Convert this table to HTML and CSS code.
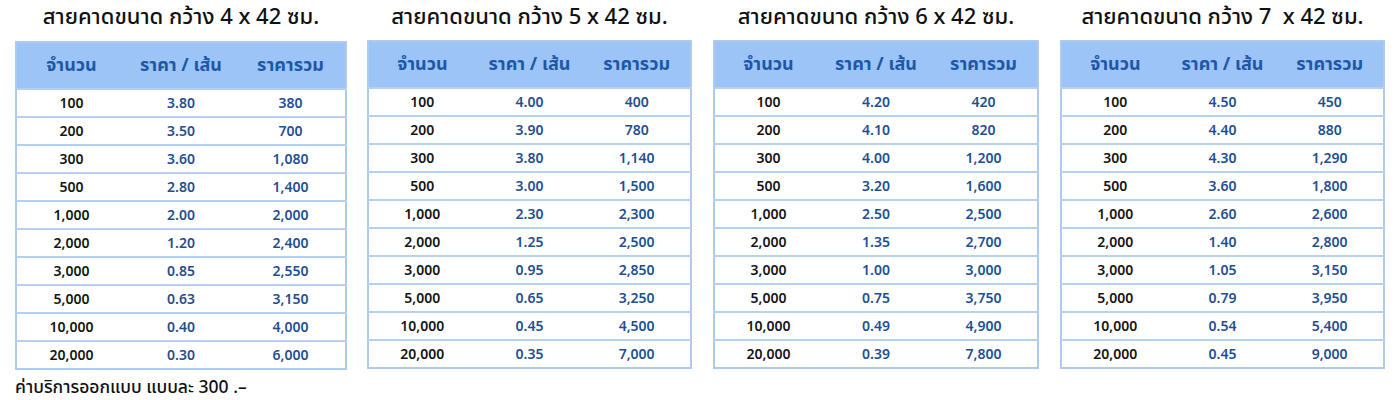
FILE: index.html
```html
<!DOCTYPE html>
<html lang="th">
<head>
<meta charset="utf-8">
<link rel="stylesheet" href="styles.css">
</head>
<body>
<div class="wrap">
  <div class="block b1">
    <h2 class="title">สายคาดขนาด กว้าง 4 x 42 ซม.</h2>
    <table class="price">
      <thead><tr><th>จำนวน</th><th>ราคา / เส้น</th><th>ราคารวม</th></tr></thead>
      <tbody>
        <tr><td>100</td><td>3.80</td><td>380</td></tr>
        <tr><td>200</td><td>3.50</td><td>700</td></tr>
        <tr><td>300</td><td>3.60</td><td>1,080</td></tr>
        <tr><td>500</td><td>2.80</td><td>1,400</td></tr>
        <tr><td>1,000</td><td>2.00</td><td>2,000</td></tr>
        <tr><td>2,000</td><td>1.20</td><td>2,400</td></tr>
        <tr><td>3,000</td><td>0.85</td><td>2,550</td></tr>
        <tr><td>5,000</td><td>0.63</td><td>3,150</td></tr>
        <tr><td>10,000</td><td>0.40</td><td>4,000</td></tr>
        <tr><td>20,000</td><td>0.30</td><td>6,000</td></tr>
      </tbody>
    </table>
    <p class="note">ค่าบริการออกแบบ แบบละ 300 .–</p>
  </div>
  <div class="block b2">
    <h2 class="title">สายคาดขนาด กว้าง 5 x 42 ซม.</h2>
    <table class="price">
      <thead><tr><th>จำนวน</th><th>ราคา / เส้น</th><th>ราคารวม</th></tr></thead>
      <tbody>
        <tr><td>100</td><td>4.00</td><td>400</td></tr>
        <tr><td>200</td><td>3.90</td><td>780</td></tr>
        <tr><td>300</td><td>3.80</td><td>1,140</td></tr>
        <tr><td>500</td><td>3.00</td><td>1,500</td></tr>
        <tr><td>1,000</td><td>2.30</td><td>2,300</td></tr>
        <tr><td>2,000</td><td>1.25</td><td>2,500</td></tr>
        <tr><td>3,000</td><td>0.95</td><td>2,850</td></tr>
        <tr><td>5,000</td><td>0.65</td><td>3,250</td></tr>
        <tr><td>10,000</td><td>0.45</td><td>4,500</td></tr>
        <tr><td>20,000</td><td>0.35</td><td>7,000</td></tr>
      </tbody>
    </table>
  </div>
  <div class="block b3">
    <h2 class="title">สายคาดขนาด กว้าง 6 x 42 ซม.</h2>
    <table class="price">
      <thead><tr><th>จำนวน</th><th>ราคา / เส้น</th><th>ราคารวม</th></tr></thead>
      <tbody>
        <tr><td>100</td><td>4.20</td><td>420</td></tr>
        <tr><td>200</td><td>4.10</td><td>820</td></tr>
        <tr><td>300</td><td>4.00</td><td>1,200</td></tr>
        <tr><td>500</td><td>3.20</td><td>1,600</td></tr>
        <tr><td>1,000</td><td>2.50</td><td>2,500</td></tr>
        <tr><td>2,000</td><td>1.35</td><td>2,700</td></tr>
        <tr><td>3,000</td><td>1.00</td><td>3,000</td></tr>
        <tr><td>5,000</td><td>0.75</td><td>3,750</td></tr>
        <tr><td>10,000</td><td>0.49</td><td>4,900</td></tr>
        <tr><td>20,000</td><td>0.39</td><td>7,800</td></tr>
      </tbody>
    </table>
  </div>
  <div class="block b4">
    <h2 class="title">สายคาดขนาด กว้าง 7&nbsp; x 42 ซม.</h2>
    <table class="price">
      <thead><tr><th>จำนวน</th><th>ราคา / เส้น</th><th>ราคารวม</th></tr></thead>
      <tbody>
        <tr><td>100</td><td>4.50</td><td>450</td></tr>
        <tr><td>200</td><td>4.40</td><td>880</td></tr>
        <tr><td>300</td><td>4.30</td><td>1,290</td></tr>
        <tr><td>500</td><td>3.60</td><td>1,800</td></tr>
        <tr><td>1,000</td><td>2.60</td><td>2,600</td></tr>
        <tr><td>2,000</td><td>1.40</td><td>2,800</td></tr>
        <tr><td>3,000</td><td>1.05</td><td>3,150</td></tr>
        <tr><td>5,000</td><td>0.79</td><td>3,950</td></tr>
        <tr><td>10,000</td><td>0.54</td><td>5,400</td></tr>
        <tr><td>20,000</td><td>0.45</td><td>9,000</td></tr>
      </tbody>
    </table>
  </div>
</div>
</body>
</html>
```
FILE: styles.css
```css
html, body {
  margin: 0;
  padding: 0;
  background: #ffffff;
}
body {
  font-family: "Noto Sans Thai", "Noto Sans", "DejaVu Sans", sans-serif;
  color: #111111;
}
.wrap {
  display: flex;
  align-items: flex-start;
  gap: 20px;
  padding-left: 15px;
}
.b1 { width: 332px; }
.b2 { width: 325px; }
.b3 { width: 326px; margin-left: 1px; }
.b4 { width: 325px; margin-left: 1px; }
.title {
  margin: 0;
  height: 40px;
  font-size: 22px;
  font-weight: 500;
  line-height: 36px;
  text-align: center;
  color: #111111;
  white-space: nowrap;
}
.b1 .title { height: 41px; }
.price {
  width: 100%;
  border-collapse: collapse;
  table-layout: fixed;
  border: 2px solid #aecbef;
}
.price th {
  background: #9cc4f7;
  color: #1d58a8;
  font-size: 18px;
  font-weight: 700;
  height: 45px;
  padding: 0;
  text-align: center;
}
.price td {
  height: 26px;
  padding: 0;
  text-align: center;
  font-size: 14px;
  font-weight: 600;
  border-top: 2px solid #b5d0f1;
}
.price td:first-child { color: #141414; }
.price td + td { color: #1f4f92; }
.note {
  margin: 4px 0 0;
  font-size: 17.5px;
  font-weight: 500;
  color: #111111;
  white-space: nowrap;
}
```
